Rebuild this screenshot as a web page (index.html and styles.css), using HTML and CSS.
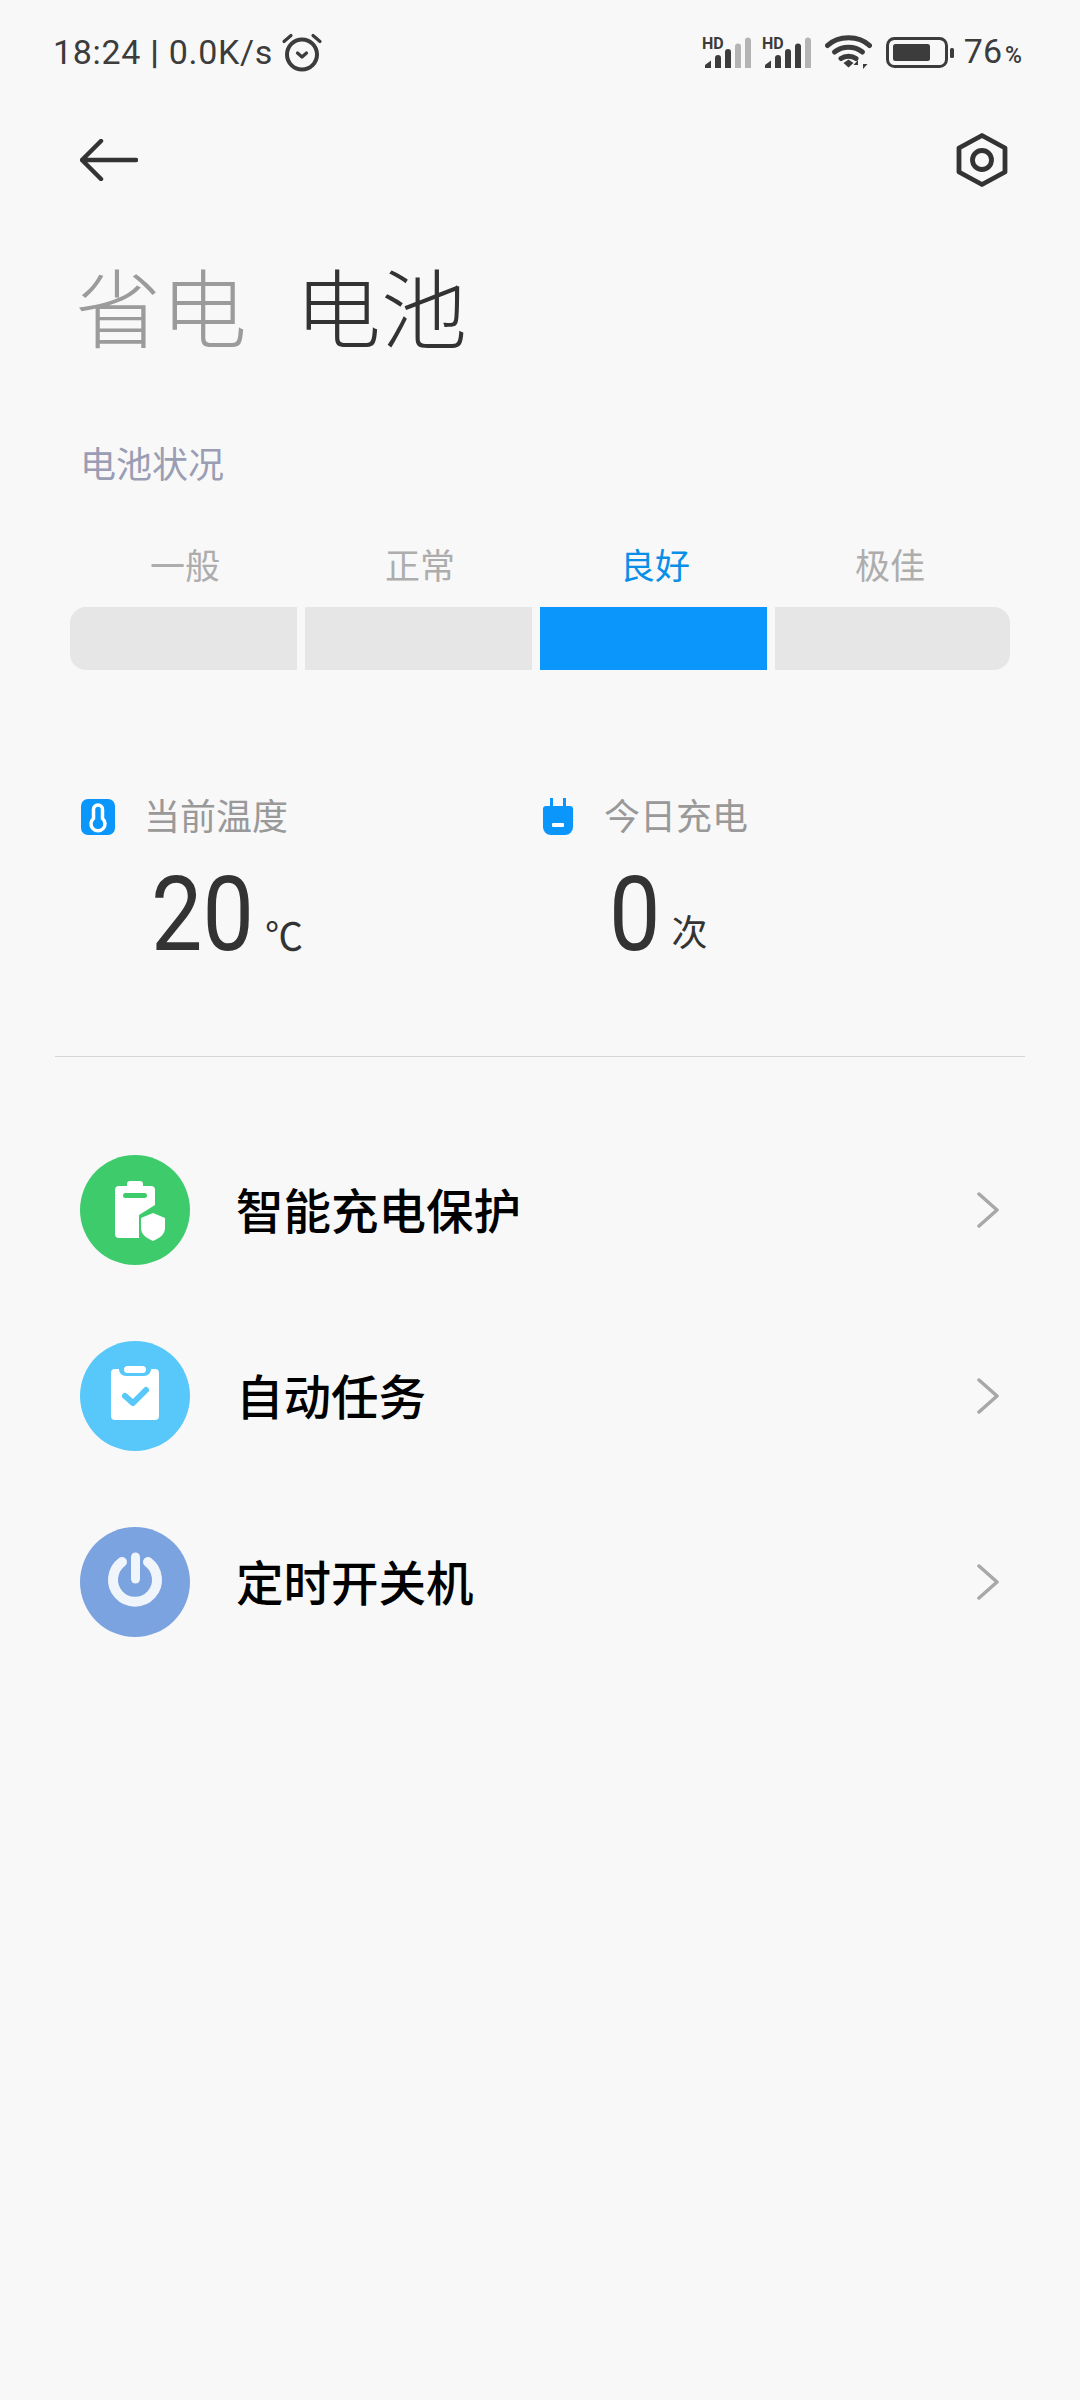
FILE: index.html
```html
<!DOCTYPE html>
<html lang="zh-CN">
<head>
    <meta charset="UTF-8">
    <title>电池</title>
    <link rel="stylesheet" href="styles.css">
</head>
<body>
    <div class="status">
        <div class="status-left">
            <span>18:24 <b class="sep">|</b> 0.0K/s</span>
            <svg class="alarm" width="42" height="40" viewBox="0 0 42 40" fill="none" stroke="#3c3c3c">
                <circle cx="21" cy="22.500" r="15" stroke-width="4"/>
                <path d="M16.500 21l4.500 4 4.500-4" stroke-width="3.200" stroke-linecap="round" stroke-linejoin="round"/>
                <path d="M3 9.500L10 3.500M39 9.500L32 3.500" stroke-width="3.200" stroke-linecap="round"/>
            </svg>
        </div>
        <div class="status-right">
            <svg class="signal" width="51" height="34" viewBox="0 0 51 34">
                <text x="0" y="14" class="hd">HD</text>
                <path class="on" d="M3 33v-3l6-4.500V33zM13 33V23a3 3 0 0 1 6 0v10zM23 33V17a3 3 0 0 1 6 0v16z"/>
                <path class="off" d="M33 33V11.500a3 3 0 0 1 6 0V33zM43 33V6a3 3 0 0 1 6-1v28z"/>
            </svg>
            <svg class="signal" width="51" height="34" viewBox="0 0 51 34">
                <text x="0" y="14" class="hd">HD</text>
                <path class="on" d="M3 33v-3l6-4.500V33zM13 33V23a3 3 0 0 1 6 0v10zM23 33V17a3 3 0 0 1 6 0v16zM33 33V11.500a3 3 0 0 1 6 0V33z"/>
                <path class="off" d="M43 33V6a3 3 0 0 1 6-1v28z"/>
            </svg>
            <svg class="wifi" width="47" height="36" viewBox="0 0 47 36" fill="none" stroke="#3c3c3c" stroke-width="5" stroke-linecap="round">
                <path d="M2.500 11.500C13 1 34 1 44.500 11.500"/>
                <path d="M9.500 18c8-6.500 20-6.500 28 0"/>
                <path d="M16 24.500c4-3 11-3 15 0"/>
                <path d="M18.500 29l5-3.500 5 3.500-5 4.500z" fill="#3c3c3c" stroke="none"/>
                <path d="M33 35v-9l-4.500 5h4.500zM38 26v9l4.500-5H38z" fill="#3c3c3c" stroke="none"/>
            </svg>
            <svg class="battery" width="68" height="31" viewBox="0 0 68 31">
                <rect x="1.500" y="1.500" width="59" height="28" rx="7" fill="none" stroke="#3c3c3c" stroke-width="3"/>
                <rect x="7" y="7" width="37" height="17" rx="2.500" fill="#3c3c3c"/>
                <rect x="64" y="11" width="4" height="10" rx="1.500" fill="#3c3c3c"/>
            </svg>
            <span class="percent">76<small>%</small></span>
        </div>
    </div>

    <div class="toolbar">
        <svg width="58" height="42" viewBox="0 0 58 42" fill="none" stroke="#333" stroke-width="4.500" stroke-linecap="round" stroke-linejoin="round">
            <path d="M56 21H3M21 2L2 21l19 19"/>
        </svg>
        <svg width="52" height="54" viewBox="0 0 52 54" fill="none" stroke="#333">
            <path d="M26 2.500l23 12.500v24L26 51.500 3 39V15z" stroke-width="4.800" stroke-linejoin="round"/>
            <circle cx="26" cy="27" r="9.500" stroke-width="4.800"/>
        </svg>
    </div>

    <h1 class="title"><span class="title-off">省电</span><span>电池</span></h1>

    <div class="section-label">电池状况</div>

    <div class="levels">
        <span>一般</span>
        <span>正常</span>
        <span class="now">良好</span>
        <span>极佳</span>
    </div>
    <div class="bar">
        <div class="seg"></div>
        <div class="seg"></div>
        <div class="seg seg-now"></div>
        <div class="seg"></div>
    </div>

    <div class="stats">
        <div class="stat">
            <div class="stat-head">
                <svg width="34" height="36" viewBox="0 0 34 36">
                    <rect width="34" height="36" rx="7" fill="#0a96fa"/>
                    <path d="M17 6a4.500 4.500 0 0 1 4.500 4.500v9a7 7 0 1 1-9 0v-9A4.500 4.500 0 0 1 17 6z" fill="none" stroke="#fff" stroke-width="3.500"/>
                </svg>
                <span class="stat-name">当前温度</span>
            </div>
            <div class="stat-value"><span class="num">20</span><span class="unit unit-temp">℃</span></div>
        </div>
        <div class="stat">
            <div class="stat-head">
                <svg width="34" height="38" viewBox="0 0 34 38">
                    <path d="M9 0h3v9H9zM22 0h3v9h-3z" fill="#0a96fa"/>
                    <path d="M5 8h24a3 3 0 0 1 3 3v18a8 8 0 0 1-8 8H10a8 8 0 0 1-8-8V11a3 3 0 0 1 3-3z" fill="#0a96fa"/>
                    <rect x="11" y="25" width="12" height="4" rx="1" fill="#fff"/>
                </svg>
                <span class="stat-name">今日充电</span>
            </div>
            <div class="stat-value"><span class="num num-one">0</span><span class="unit unit-count">次</span></div>
        </div>
    </div>

    <div class="divider"></div>

    <div class="list">
        <div class="row">
            <svg class="badge" width="110" height="110" viewBox="0 0 110 110">
                <circle cx="55" cy="55" r="55" fill="#3ecb6c"/>
                <path d="M47 31v-2a3 3 0 0 1 3-3h10a3 3 0 0 1 3 3v2h8a4 4 0 0 1 4 4v15L59 60v23H39a4 4 0 0 1-4-4V35a4 4 0 0 1 4-4z" fill="#fff"/>
                <rect x="43" y="38" width="24" height="5" rx="2.500" fill="#3ecb6c"/>
                <path d="M73 58l12 5v10c0 6-5 10-12 13-7-3-12-7-12-13V63z" fill="#fff"/>
            </svg>
            <span class="row-name">智能充电保护</span>
            <svg class="arrow" width="22" height="36" viewBox="0 0 22 36" fill="none" stroke="#a8a8a8" stroke-width="3.500" stroke-linecap="round" stroke-linejoin="round">
                <path d="M2 2l18 16L2 34"/>
            </svg>
        </div>
        <div class="row">
            <svg class="badge" width="110" height="110" viewBox="0 0 110 110">
                <circle cx="55" cy="55" r="55" fill="#57c8f9"/>
                <path d="M35 28h4c0 4 3 7 7 7h18c4 0 7-3 7-7h4a4 4 0 0 1 4 4v43a4 4 0 0 1-4 4H35a4 4 0 0 1-4-4V32a4 4 0 0 1 4-4z" fill="#fff"/>
                <rect x="44" y="25" width="22" height="7" rx="3.500" fill="#fff"/>
                <path d="M45 55l8 7 13-13" fill="none" stroke="#57c8f9" stroke-width="6" stroke-linecap="round" stroke-linejoin="round"/>
            </svg>
            <span class="row-name">自动任务</span>
            <svg class="arrow" width="22" height="36" viewBox="0 0 22 36" fill="none" stroke="#a8a8a8" stroke-width="3.500" stroke-linecap="round" stroke-linejoin="round">
                <path d="M2 2l18 16L2 34"/>
            </svg>
        </div>
        <div class="row">
            <svg class="badge" width="110" height="110" viewBox="0 0 110 110">
                <circle cx="55" cy="55" r="55" fill="#7ba3e0"/>
                <path d="M42 35a22 22 0 1 0 26 0" fill="none" stroke="#f0f4fb" stroke-width="10" stroke-linecap="round"/>
                <path d="M55.500 30v22" fill="none" stroke="#f0f4fb" stroke-width="9" stroke-linecap="round"/>
            </svg>
            <span class="row-name">定时开关机</span>
            <svg class="arrow" width="22" height="36" viewBox="0 0 22 36" fill="none" stroke="#a8a8a8" stroke-width="3.500" stroke-linecap="round" stroke-linejoin="round">
                <path d="M2 2l18 16L2 34"/>
            </svg>
        </div>
    </div>
</body>
</html>
```

FILE: styles.css
```css
body{
    margin:0;
    width:1080px;
    height:2400px;
    overflow:hidden;
    background-color:#f8f8f8;
    font-family:Roboto,"Noto Sans CJK SC",sans-serif;
}

/* status bar */
.status{
    height:104px;
    padding:0 58px 0 53px;
    display:flex;justify-content:space-between;align-items:center;
    color:#3c3c3c;
}
.status-left{
    display:flex;align-items:center;gap:8px;
    font-size:34px;letter-spacing:.7px;font-weight:450;
}
.sep{font-weight:700;}
.status-right{
    display:flex;align-items:center;
}
.signal{margin-right:9px;}
.wifi{margin-left:3px;margin-right:14px;}
.battery{margin-right:10px;}
.hd{font:700 16px Roboto,sans-serif;fill:#3c3c3c;}
.on{fill:#3c3c3c;}
.off{fill:#b4b4b4;}
.percent{font-size:34px;line-height:34px;padding-top:2px;}
.percent small{font-size:23px;font-weight:500;margin-left:3px;}

/* top buttons */
.toolbar{
    height:112px;
    padding:0 72px 0 80px;
    display:flex;justify-content:space-between;align-items:center;
}

.title{
    margin:47px 0 0 75px;
    font-size:86px;font-weight:300;line-height:100px;
    color:#333;
    display:flex;gap:48px;
}
.title-off{color:#9b9b9b;}

.section-label{
    margin:83px 0 0 80px;
    font-size:36px;line-height:40px;
    color:#9a9db3;
}

/* battery level */
.levels{
    margin:62px 0 0 150px;
    display:flex;gap:165px;
    font-size:35px;line-height:40px;
    color:#adadad;
}
.now{color:#0a8fe8;}
.bar{
    margin:19px 70px 0;
    height:63px;
    display:grid;
    grid-template-columns:227px 227px 227px 1fr;
    column-gap:8px;
}
.seg{background-color:#e6e6e6;}
.seg:first-child{border-radius:16px 0 0 16px;}
.seg:last-child{border-radius:0 16px 16px 0;}
.seg-now{background-color:#0a96fa;}

/* temperature and charge count */
.stats{
    margin:128px 0 0 81px;
    display:flex;
}
.stat{width:460px;}
.stat-head{
    height:38px;
    display:flex;align-items:center;
}
.stat-name{
    margin-left:29px;
    padding-top:2px;
    font-size:36px;line-height:38px;
    color:#999;
}
.stat-value{
    margin-top:27px;
    padding-left:70px;
    height:104px;
    white-space:nowrap;
    color:#333;
}
/* digits are narrower in the reference font */
.num{
    display:inline-block;
    font-size:104px;line-height:104px;font-weight:450;
    transform:scaleX(.88);transform-origin:left;
}
.num-one{margin-left:-2px;}
.unit{font-size:38px;}
.unit-temp{margin-left:-3px;}
.unit-count{margin-left:4px;font-size:36px;vertical-align:4px;}

.divider{
    margin:89px 55px 0;
    height:1px;
    background-color:#d6d6d6;
}

/* settings rows */
.list{
    margin-top:60px;
    padding:0 81px 0 80px;
}
.row{
    height:186px;
    display:flex;align-items:center;
}
.row-name{
    margin-left:46px;
    padding-bottom:4px;
    flex:1;
    font-size:47.500px;font-weight:500;
    color:#000;
}
```
